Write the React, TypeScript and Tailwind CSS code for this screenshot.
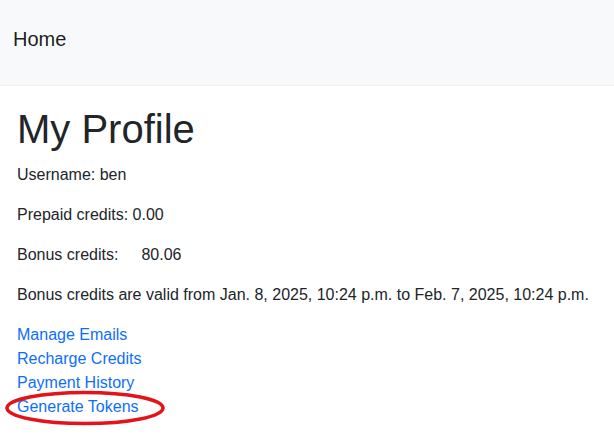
export default function App() {
  const links = ["Manage Emails", "Recharge Credits", "Payment History", "Generate Tokens"];

  return (
    <div className="min-h-screen bg-white font-['Liberation_Sans',Arial,sans-serif] text-[#212529]">
      <nav className="flex h-[86px] items-center border-b border-[#f0f1f2] bg-[#f8f9fa] px-[13px]">
        <a href="#" className="text-[20px] leading-[30px] text-black/90 -mt-[8px]">
          Home
        </a>
      </nav>

      <main className="px-[17px] pt-[19px]">
        <h1 className="mb-[10px] text-[40px] font-normal leading-[48px]">My Profile</h1>
        <p className="mb-4 text-base leading-6">Username: ben</p>
        <p className="mb-4 text-base leading-6">Prepaid credits: 0.00</p>
        <p className="mb-4 text-base leading-6">
          Bonus credits:<span className="ml-[23px]">80.06</span>
        </p>
        <p className="mb-4 text-base leading-6">
          Bonus credits are valid from Jan. 8, 2025, 10:24 p.m. to Feb. 7, 2025, 10:24 p.m.
        </p>

        <ul className="flex flex-col">
          {links.map((label, i) => (
            <li key={label} className="relative text-base leading-6">
              <a href="#" className="text-[#0d6efd]">
                {label}
              </a>
              {i === links.length - 1 ? (
                <svg
                  className="pointer-events-none absolute -left-[13px] -top-[5px]"
                  width="162"
                  height="36"
                  viewBox="0 0 162 36"
                >
                  <ellipse cx="81" cy="18" rx="78" ry="15.5" fill="none" stroke="#e3131b" strokeWidth="3.5" />
                </svg>
              ) : null}
            </li>
          ))}
        </ul>
      </main>
    </div>
  );
}
